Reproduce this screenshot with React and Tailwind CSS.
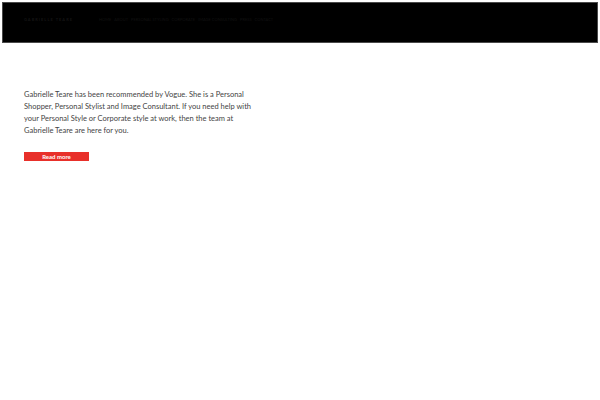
import React from "react";

export default function App() {
  return (
    <div className="w-[600px] h-[400px] bg-white p-[2px]" style={{ fontFamily: "Lato, 'Open Sans', sans-serif" }}>
      <header className="h-[41px] bg-black border border-[#4a4a4a] flex items-center pl-[21px] gap-[12px]">
        <div className="w-[63px] text-[4px] tracking-[1px] text-[#151515] font-bold leading-none mb-[6px]">GABRIELLE TEARE</div>
        <nav className="flex gap-[3px] text-[4px] text-[#121212] leading-none mb-[6px]">
          <span>HOME</span>
          <span>ABOUT</span>
          <span>PERSONAL STYLING</span>
          <span>CORPORATE</span>
          <span>IMAGE CONSULTING</span>
          <span>PRESS</span>
          <span>CONTACT</span>
        </nav>
      </header>
      <main className="pl-[22px] pt-[46px]">
        <p className="w-[232px] text-[7.5px] leading-[12px] text-[#444]">
          Gabrielle Teare has been recommended by Vogue. She is a Personal Shopper, Personal Stylist and Image Consultant. If you need help with your Personal Style or Corporate style at work, then the team at Gabrielle Teare are here for you.
        </p>
        <button className="mt-[15px] w-[65px] h-[9px] bg-[#e8302a] text-white text-[6px] font-bold leading-none flex items-center justify-center">
          Read more
        </button>
      </main>
    </div>
  );
}
